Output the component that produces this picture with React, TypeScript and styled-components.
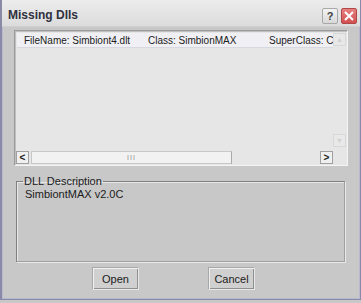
import React from 'react';
import styled, { createGlobalStyle } from 'styled-components';

const Global = createGlobalStyle`
    html, body { margin: 0; padding: 0; background: #c8c8c8; }
    body { font-family: "Liberation Sans", Arial, sans-serif; }
`;

export default function App() {
    return (
        <>
            <Global />
            <Window>
                <TitleBar>
                    <Title>Missing Dlls</Title>
                    <Controls>
                        <CtlButton>?</CtlButton>
                        <CtlButton close>
                            <svg width="10" height="10" viewBox="0 0 10 10">
                                <path d="M1 1 L9 9 M9 1 L1 9" stroke="#fff" strokeWidth="2" />
                            </svg>
                        </CtlButton>
                    </Controls>
                </TitleBar>
                <Body>
                    <ListBox>
                        <ListArea>
                            <HeaderRow>
                                <Col w={124}>FileName: Simbiont4.dlt</Col>
                                <Col w={121}>Class: SimbionMAX</Col>
                                <Col>SuperClass: C</Col>
                            </HeaderRow>
                        </ListArea>
                        <VScroll>
                            <Arrow disabled>▲</Arrow>
                            <Arrow disabled>▼</Arrow>
                        </VScroll>
                        <HScroll>
                            <Arrow>&lt;</Arrow>
                            <Track>
                                <Thumb>III</Thumb>
                            </Track>
                            <Arrow>&gt;</Arrow>
                        </HScroll>
                        <Corner />
                    </ListBox>
                    <Group>
                        <Legend>DLL Description</Legend>
                        <Desc>SimbiontMAX v2.0C</Desc>
                    </Group>
                    <ButtonRow>
                        <PushButton>Open</PushButton>
                        <PushButton>Cancel</PushButton>
                    </ButtonRow>
                </Body>
            </Window>
        </>
    );
}

const Window = styled.div`
    width: 361px;
    height: 300px;
    box-sizing: border-box;
    border: 1px solid #8a8aa8;
    border-top: none;
    border-left-width: 2px;
    box-shadow: inset 1px 0 0 #b8b8d0, inset -1px 0 0 #b8b8d0, inset 0 -1px 0 #b8b8d0;
    background: #c8c8c8;
    display: flex;
    flex-direction: column;
    overflow: hidden;
`;

const TitleBar = styled.div`
    height: 26px;
    flex: none;
    display: flex;
    align-items: center;
    justify-content: space-between;
    padding: 0 3px 0 6px;
    background: linear-gradient(#ececec, #dcdcdc);
    border-bottom: 1px solid #d0d0d0;
`;

const Title = styled.div`
    font-weight: bold;
    font-size: 12px;
    color: #303040;
    padding-top: 3px;
`;

const Controls = styled.div`
    display: flex;
    gap: 3px;
    padding-top: 6px;
`;

const CtlButton = styled.div<{ close?: boolean }>`
    width: 16px;
    height: 16px;
    box-sizing: border-box;
    display: flex;
    align-items: center;
    justify-content: center;
    font-size: 11px;
    font-weight: bold;
    color: #404040;
    border: 1px solid ${p => (p.close ? '#b04848' : '#a8a8a8')};
    border-radius: 2px;
    background: ${p => (p.close ? 'linear-gradient(#e88080, #d05050)' : 'linear-gradient(#f4f4f4, #d8d8d8)')};
`;

const Body = styled.div`
    flex: 1;
    display: flex;
    flex-direction: column;
    padding: 3px 11px 0 12px;
`;

const ListBox = styled.div`
    height: 136px;
    width: 334px;
    box-sizing: border-box;
    display: grid;
    grid-template-columns: 1fr 14px;
    grid-template-rows: 1fr 16px;
    background: #e6e6e6;
    border: 1px solid #9a9a9a;
    border-right-color: #f4f4f4;
    border-bottom-color: #f4f4f4;
    box-shadow: inset 1px 1px 0 #c0c0c0;
`;

const ListArea = styled.div`
    padding: 2px 0 0 2px;
    overflow: hidden;
`;

const HeaderRow = styled.div`
    display: flex;
    height: 14px;
    align-items: center;
    padding-left: 7px;
    background: #f0f0f4;
    border-bottom: 1px solid #d8d8e0;
    font-size: 10px;
    color: #202020;
    white-space: nowrap;
`;

const Col = styled.span<{ w?: number }>`
    width: ${p => (p.w ? `${p.w}px` : 'auto')};
    flex: none;
`;

const VScroll = styled.div`
    display: flex;
    flex-direction: column;
    justify-content: space-between;
    padding: 2px 0;
`;

const HScroll = styled.div`
    display: flex;
    align-items: center;
    padding-left: 1px;
`;

const Arrow = styled.div<{ disabled?: boolean }>`
    width: 13px;
    height: 13px;
    box-sizing: border-box;
    display: flex;
    align-items: center;
    justify-content: center;
    font-size: ${p => (p.disabled ? '7px' : '10px')};
    font-weight: bold;
    color: ${p => (p.disabled ? '#d0d0d0' : '#202020')};
    border: 1px solid ${p => (p.disabled ? '#d8d8d8' : '#a0a0a0')};
    background: ${p => (p.disabled ? '#e8e8e8' : '#f0f0f0')};
`;

const Track = styled.div`
    flex: 1;
    height: 13px;
    padding-right: 88px;
    display: flex;
`;

const Thumb = styled.div`
    flex: 1;
    margin-left: 2px;
    box-sizing: border-box;
    border: 1px solid #c8c8c8;
    border-right-color: #a8a8a8;
    background: #f2f2f2;
    font-size: 7px;
    color: #909090;
    display: flex;
    align-items: center;
    justify-content: center;
    letter-spacing: 1px;
`;

const Corner = styled.div`
    background: #e6e6e6;
`;

const Group = styled.fieldset`
    margin: 9px 4px 0 2px;
    padding: 1px 8px 0;
    height: 87px;
    box-sizing: border-box;
    border: 1px solid #808080;
    border-right-color: #a0a0a0;
    border-bottom-color: #a0a0a0;
    box-shadow: 1px 1px 0 #e8e8e8, inset 1px 1px 0 #e8e8e8;
`;

const Legend = styled.legend`
    font-size: 11px;
    color: #202020;
    padding: 0 1px;
    margin-left: -2px;
`;

const Desc = styled.div`
    font-size: 11px;
    color: #202020;
`;

const ButtonRow = styled.div`
    display: flex;
    gap: 69px;
    padding-left: 78px;
    margin-top: 5px;
`;

const PushButton = styled.div`
    width: 47px;
    height: 23px;
    box-sizing: border-box;
    display: flex;
    align-items: center;
    justify-content: center;
    font-size: 11px;
    color: #202020;
    background: #d0d0d0;
    border: 1px solid #a8a8a8;
    border-right-color: #e8e8e8;
    border-bottom-color: #e8e8e8;
    box-shadow: inset 1px 1px 0 #f0f0f0, inset -1px -1px 0 #909090;
`;
